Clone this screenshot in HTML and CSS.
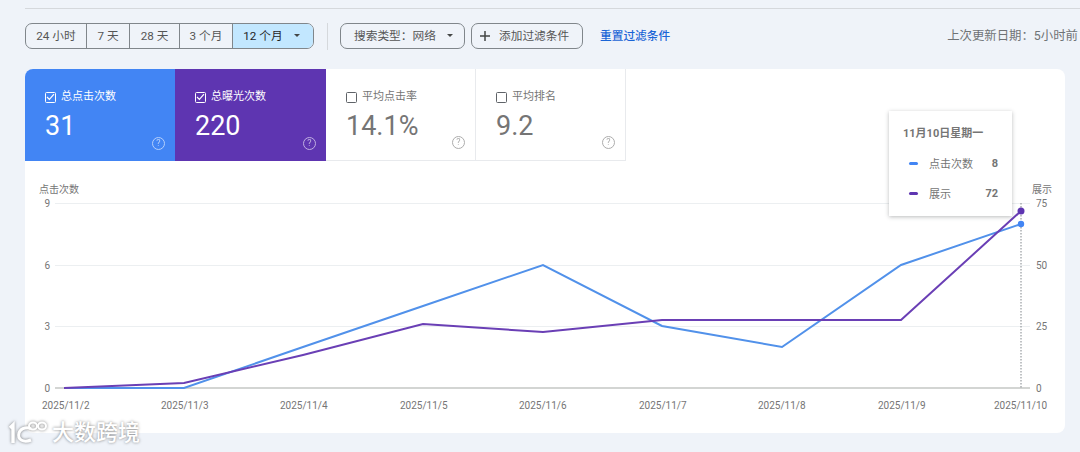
FILE: index.html
```html
<!DOCTYPE html>
<html lang="zh">
<head>
    <meta charset="UTF-8">
    <meta name="viewport" content="width=device-width, initial-scale=1.0">
    <title>效果</title>
    <link rel="stylesheet" href="styles.css">
</head>
<body>
    <div class="top-rule"></div>

    <div class="toolbar">
        <div class="range">
            <span class="range-item r1">24 小时</span>
            <span class="range-item r2">7 天</span>
            <span class="range-item r3">28 天</span>
            <span class="range-item r4">3 个月</span>
            <span class="range-item r5 selected">12 个月<i class="caret"></i></span>
        </div>
        <div class="divider"></div>
        <span class="chip chip-type">搜索类型：网络<i class="caret"></i></span>
        <span class="chip chip-add">
            <svg class="plus" width="12" height="12" viewBox="0 0 12 12"><path d="M6 1v10M1 6h10" stroke="#444746" stroke-width="1.5" fill="none"/></svg>
            添加过滤条件
        </span>
        <span class="reset">重置过滤条件</span>
        <span class="updated">上次更新日期：5小时前</span>
    </div>

    <div class="card">
        <div class="tabs">
            <div class="tab tab-blue">
                <div class="tab-label"><span class="box checked"><svg width="9" height="8" viewBox="0 0 9 8"><path d="M1 4l2.4 2.4L8 1.2" stroke="#fff" stroke-width="1.2" fill="none"/></svg></span>总点击次数</div>
                <div class="tab-value">31</div>
                <span class="help">?</span>
            </div>
            <div class="tab tab-purple">
                <div class="tab-label"><span class="box checked"><svg width="9" height="8" viewBox="0 0 9 8"><path d="M1 4l2.4 2.4L8 1.2" stroke="#fff" stroke-width="1.2" fill="none"/></svg></span>总曝光次数</div>
                <div class="tab-value">220</div>
                <span class="help">?</span>
            </div>
            <div class="tab tab-off">
                <div class="tab-label"><span class="box"></span>平均点击率</div>
                <div class="tab-value">14.1%</div>
                <span class="help">?</span>
            </div>
            <div class="tab tab-off">
                <div class="tab-label"><span class="box"></span>平均排名</div>
                <div class="tab-value">9.2</div>
                <span class="help">?</span>
            </div>
        </div>

        <svg class="chart" width="1040" height="272" viewBox="25 161 1040 272">
            <g class="grid">
                <path d="M55 203.500H1030M55 265.500H1030M55 326.500H1030"/>
            </g>
            <path class="baseline" d="M55 388H1030"/>
            <path class="cursor" d="M1021 203V388"/>

            <text class="axis-title" x="39" y="193">点击次数</text>
            <text class="axis-title" x="1032" y="193">展示</text>

            <text class="tick end" x="50" y="207">9</text>
            <text class="tick end" x="50" y="269">6</text>
            <text class="tick end" x="50" y="330">3</text>
            <text class="tick end" x="50" y="392">0</text>

            <text class="tick" x="1036" y="207">75</text>
            <text class="tick" x="1036" y="269">50</text>
            <text class="tick" x="1036" y="330">25</text>
            <text class="tick" x="1036" y="392">0</text>

            <text class="tick" x="42" y="409">2025/11/2</text>
            <text class="tick" x="161" y="409">2025/11/3</text>
            <text class="tick" x="280" y="409">2025/11/4</text>
            <text class="tick" x="400" y="409">2025/11/5</text>
            <text class="tick" x="519" y="409">2025/11/6</text>
            <text class="tick" x="639" y="409">2025/11/7</text>
            <text class="tick" x="758" y="409">2025/11/8</text>
            <text class="tick" x="878" y="409">2025/11/9</text>
            <text class="tick" x="994" y="409">2025/11/10</text>

            <polyline class="line-blue" points="64,388 184,388 303,347 423,306 543,265 662,326 782,347 901,265 1021,224"/>
            <polyline class="line-purple" points="64,388 184,383 303,355 423,324 543,332 662,320 782,320 901,320 1021,211"/>
            <circle cx="1021" cy="224" r="3.200" fill="#4285f4"/>
            <circle cx="1021" cy="211" r="3.500" fill="#5e35b1"/>
        </svg>

        <div class="tooltip">
            <div class="tip-date">11月10日星期一</div>
            <div class="tip-row"><i class="dash dash-blue"></i><span class="tip-name">点击次数</span><b>8</b></div>
            <div class="tip-row"><i class="dash dash-purple"></i><span class="tip-name">展示</span><b>72</b></div>
        </div>
    </div>

    <div class="watermark">
        <svg width="40" height="26" viewBox="0 0 40 26">
            <g fill="none" stroke="#fff">
                <path d="M1 8l3-3v18" stroke-width="3.400"/>
                <path d="M22 9c-2-2-10-2-12 4-2 7 5 10 12 7" stroke-width="3"/>
                <ellipse cx="24" cy="6" rx="4" ry="3.500" stroke-width="2"/>
                <ellipse cx="33" cy="6" rx="4" ry="3.500" stroke-width="2"/>
            </g>
        </svg>
        <span>大数跨境</span>
    </div>
</body>
</html>
```

FILE: styles.css
```css
html, body { height: 100%; }
body { margin: 0; width: 1080px; height: 452px; overflow: hidden; position: relative; background-color: #eff3f9; font-family: Roboto, "Noto Sans CJK SC", sans-serif; color: #555; }

.top-rule { height: 1px; margin: 8px 0 0 25px; background-color: #d5d8dc; }

.toolbar { display: flex; align-items: center; height: 26px; margin: 14px 0 20px 25px; font-size: 11.700px; line-height: 24px; }
.range { display: flex; height: 26px; box-sizing: border-box; border: 1px solid #80868b; border-radius: 7px; overflow: hidden; }
.range-item { display: flex; align-items: center; justify-content: center; box-sizing: border-box; border-left: 1px solid #80868b; padding-bottom: 1px; color: #555; white-space: nowrap; }
.r1 { width: 60px; border-left: none; }
.r2 { width: 43px; }
.r3 { width: 50px; }
.r4 { width: 53px; }
.r5 { width: 81px; padding-right: 3px; }
.selected { background-color: #c2e7ff; color: #1f1f1f; }
.caret { display: inline-block; width: 0; height: 0; margin-left: 11px; border-left: 3.500px solid transparent; border-right: 3.500px solid transparent; border-top: 3.500px solid #444746; }

.divider { width: 1px; height: 27px; margin: 0 12px 0 13px; background-color: #d5d8dc; }
.chip { display: flex; align-items: center; height: 26px; box-sizing: border-box; border: 1px solid #80868b; border-radius: 7px; padding-bottom: 1px; white-space: nowrap; }
.chip-type { width: 125px; padding-left: 13px; }
.chip-add { width: 112px; margin-left: 6px; padding-left: 7px; }
.plus { margin-right: 8px; }
.reset { margin-left: 17px; color: #1a65d6; font-weight: 500; }
.updated { margin-left: auto; margin-right: 2px; font-size: 12.400px; color: #6f7376; white-space: nowrap; }

.card { position: relative; width: 1040px; height: 364px; margin-left: 25px; background-color: #fff; border-radius: 8px; overflow: hidden; }
.tabs { display: flex; height: 92px; }
.tab { position: relative; width: 150px; box-sizing: border-box; padding: 20px 0 0 20px; }
.tab-blue { background-color: #4285f4; color: #fff; }
.tab-purple { background-color: #5e35b1; color: #fff; width: 151px; }
.tab-off { color: #757575; border-right: 1px solid #e8eaed; border-bottom: 1px solid #e8eaed; }
.tab-label { display: flex; align-items: center; gap: 5px; height: 16px; font-size: 11px; line-height: 16px; }
.box { display: flex; align-items: center; justify-content: center; width: 11px; height: 11px; box-sizing: border-box; border: 1px solid #5f6368; border-radius: 1.500px; }
.box.checked { border-color: #fff; }
.tab-value { margin-top: 5px; font-size: 27px; line-height: 32px; font-weight: 400; }
.help { position: absolute; right: 10px; bottom: 11px; width: 13px; height: 13px; box-sizing: border-box; border: 1px solid currentColor; border-radius: 50%; font-size: 9px; line-height: 11px; text-align: center; opacity: 0.6; }

.chart { display: block; }
.grid path { stroke: #eceff1; stroke-width: 1; fill: none; }
.baseline { stroke: #c4c7c5; stroke-width: 1.500; fill: none; }
.cursor { stroke: #80868b; stroke-width: 1; stroke-dasharray: 1.500 1.500; fill: none; }
.axis-title { font-size: 10px; fill: #757575; }
.tick { font-size: 10px; fill: #757575; }
.end { text-anchor: end; }
.line-blue { fill: none; stroke: #5191ea; stroke-width: 2; }
.line-purple { fill: none; stroke: #6a3fb5; stroke-width: 2; }

.tooltip { position: absolute; left: 864px; top: 42px; width: 123px; height: 105px; box-sizing: border-box; padding: 15px 14px 0 14px; background-color: #fff; box-shadow: 0 1px 4px rgba(60, 64, 67, 0.35); font-size: 11px; color: #757575; }
.tip-date { font-weight: 700; line-height: 16px; margin-bottom: 6px; }
.tip-row { display: flex; align-items: center; height: 30px; }
.tip-row b { margin-left: auto; font-weight: 700; }
.dash { width: 9px; height: 3px; margin: 0 11px 0 6px; border-radius: 2px; }
.dash-blue { background-color: #4285f4; }
.dash-purple { background-color: #5e35b1; }

.watermark { position: absolute; left: 9px; top: 420px; display: flex; align-items: center; gap: 3px; color: #fff; font-size: 22px; line-height: 26px; font-weight: 500; text-shadow: 0 0 3px rgba(0, 0, 0, 0.5); }
.watermark svg { filter: drop-shadow(0 0 1.500px rgba(0, 0, 0, 0.5)); }
```
